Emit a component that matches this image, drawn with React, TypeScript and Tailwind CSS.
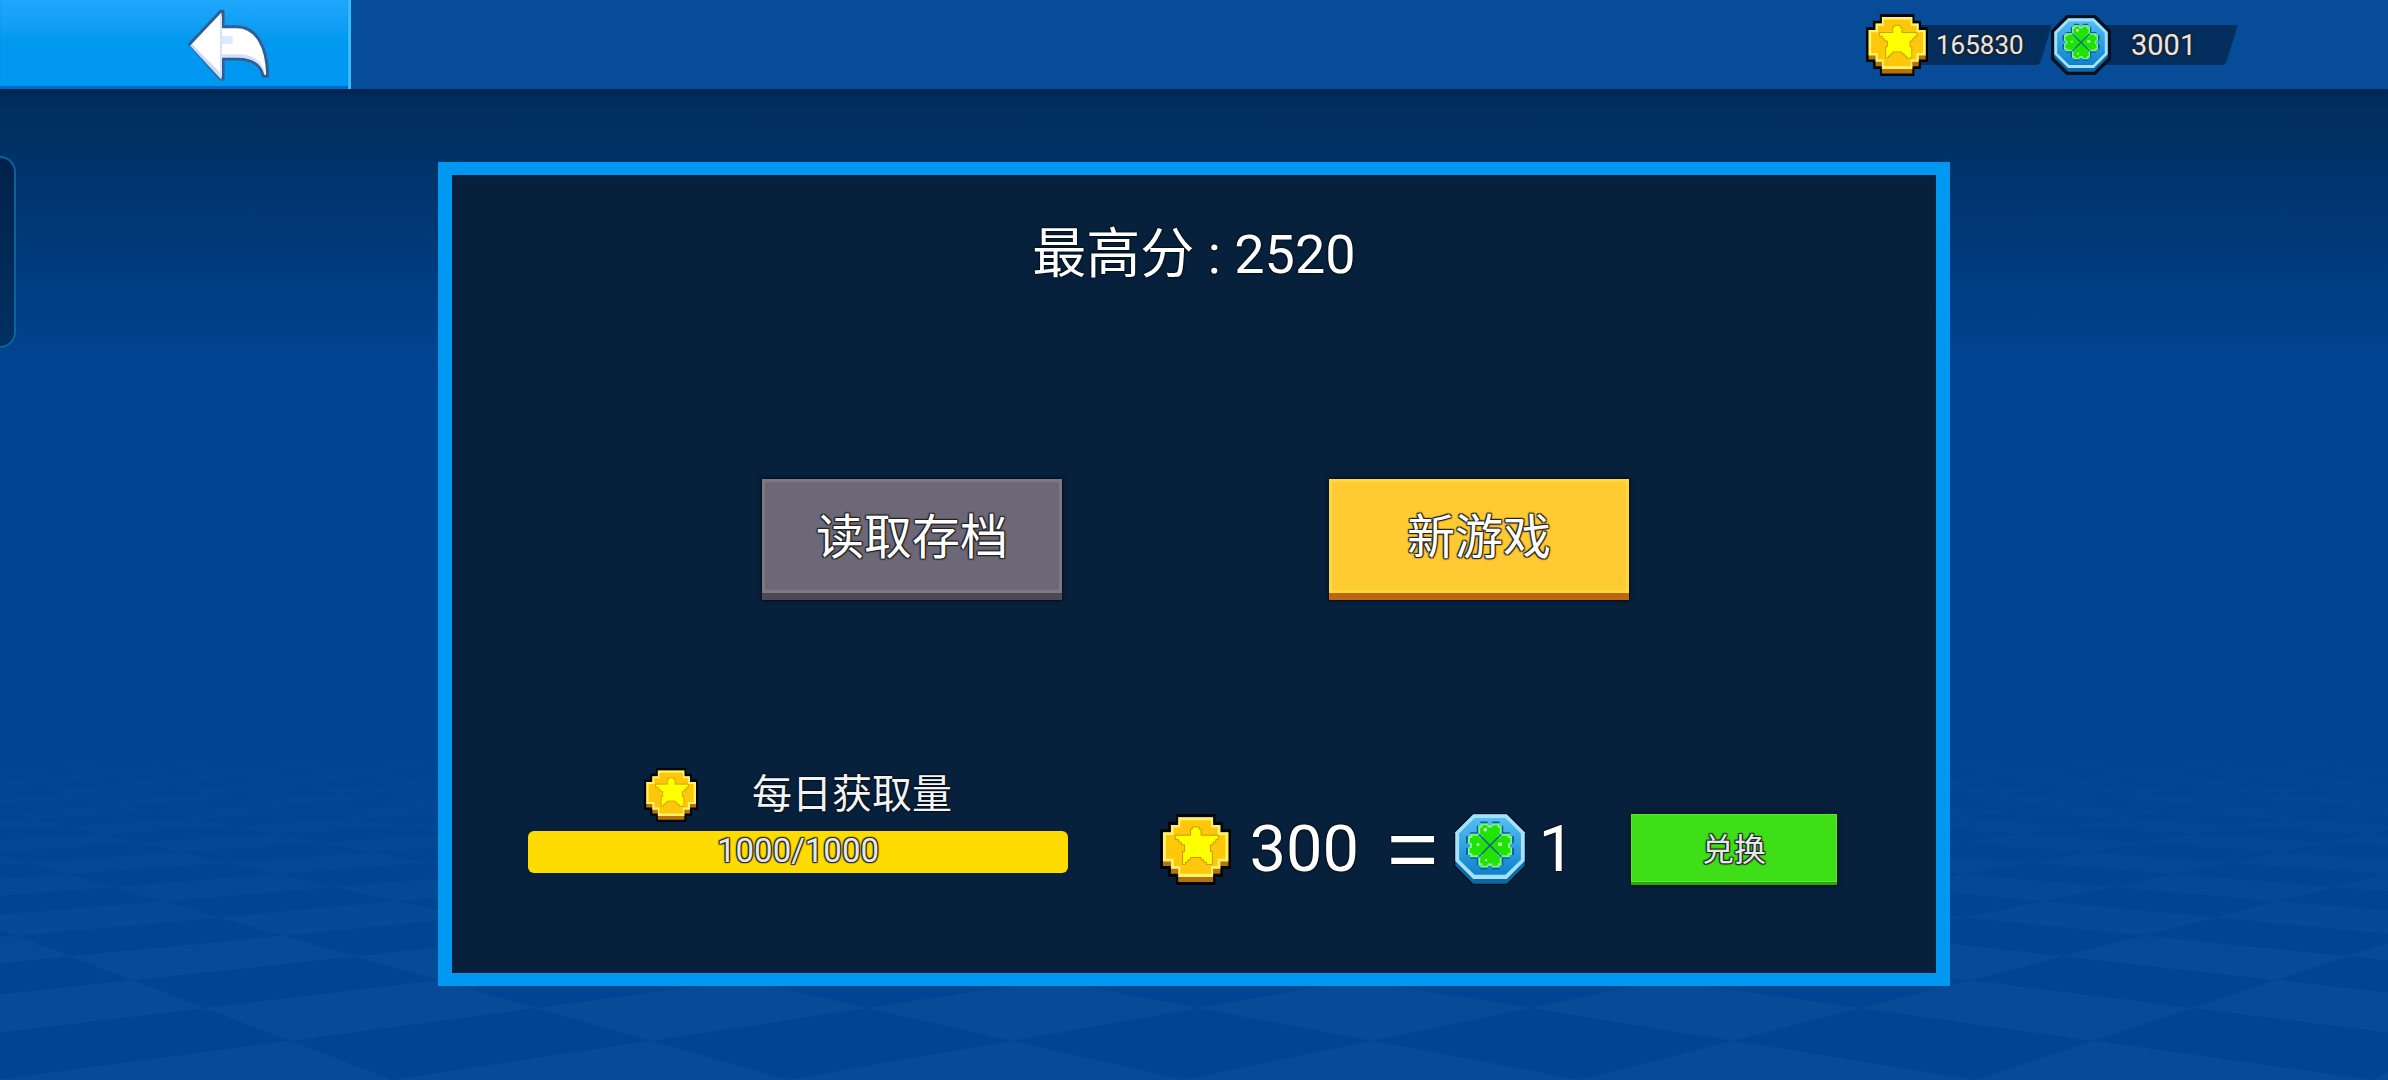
import { useId } from 'react';

const textFont = "font-['Roboto','Noto_Sans_CJK_SC',sans-serif]";
const softOutline = '[text-shadow:0_0_2px_#000,0_0_2px_#000]';
const hardOutline =
  '[text-shadow:1px_1px_1px_#222,-1px_1px_1px_#222,1px_-1px_1px_#222,-1px_-1px_1px_#222,0_0_2px_#222]';

// Floor tiles: two families of lines that meet on the horizon at y = 640
const HORIZON = 640;

function corner(i: number, j: number) {
  const depth = 4054 / (10.115 + 0.9 * (i - j));
  return [-752 + depth * (2.6 + 0.9 * i), HORIZON + depth];
}

function floorPath() {
  const tiles: string[] = [];
  for (let k = -3; k < 40; k++) {
    for (let i = -30; i < 50; i++) {
      const j = i - k;
      if ((i + j) % 2 === 0) continue;
      const pts = [corner(i, j), corner(i + 1, j), corner(i + 1, j + 1), corner(i, j + 1)];
      if (pts.every(([x]) => x < -50 || x > 2440)) continue;
      tiles.push('M' + pts.map(([x, y]) => `${x.toFixed(1)} ${y.toFixed(1)}`).join('L') + 'Z');
    }
  }
  return tiles.join('');
}

const FLOOR = floorPath();

function Floor() {
  return (
    <svg
      className="absolute inset-0 h-full w-full"
      viewBox="0 0 2388 1080"
      preserveAspectRatio="xMidYMax slice"
      aria-hidden="true"
    >
      <defs>
        <linearGradient id="floor-fade" x1="0" y1="740" x2="0" y2="960" gradientUnits="userSpaceOnUse">
          <stop offset="0" stopColor="#054b97" stopOpacity="0" />
          <stop offset="1" stopColor="#054b97" />
        </linearGradient>
      </defs>
      <path d={FLOOR} fill="url(#floor-fade)" />
    </svg>
  );
}

function Coin({ className }: { className: string }) {
  return (
    <svg className={className} viewBox="0 0 214 214" aria-hidden="true">
      <path
        d="M48 0H167V23H190V46H214V166H190V190H167V214H48V190H24V166H0V46H24V23H48Z"
        fill="#050505"
      />
      <path
        d="M55 10H160V33H182V55H206V157H182V180H160V205H55V180H33V157H9V55H33V33H55Z"
        fill="#b3730d"
      />
      <path
        d="M55 10H160V33H182V55H206V143H182V165H160V190H55V165H33V143H9V55H33V33H55Z"
        fill="#fff36e"
      />
      <path
        d="M61 19H154V41H174V63H197V135H174V157H154V180H61V157H41V135H18V63H41V41H61Z"
        fill="#ffc70a"
      />
      <path
        d="M97 46V39H118V46H124V64H176V77H168V85H160V93H152V113H158V152H140V145H132V138H124V131H92V138H84V145H77V152H68V113H74V93H64V85H56V77H46V64H92V46Z"
        fill="#ffff00"
        stroke="#c8960a"
        strokeWidth="3"
      />
    </svg>
  );
}

function Clover({ className, rim }: { className: string; rim: number }) {
  const id = useId();
  return (
    <svg className={className} viewBox="0 0 220 220" aria-hidden="true">
      <defs>
        <linearGradient id={id} x1="0" y1="0" x2="0" y2="1">
          <stop offset="0" stopColor="#55bdf5" />
          <stop offset="1" stopColor="#0f82cc" />
        </linearGradient>
      </defs>
      <path d="M57 0H163L220 57V163L163 220H57L0 163V57Z" fill="#04101c" />
      <g transform={`translate(${rim} ${rim}) scale(${(220 - 2 * rim) / 220})`}>
        <path d="M57 0H163L220 57V163L163 220H57L0 163V57Z" fill="#0d68a6" />
        <path d="M57 0H163L220 57V148L163 205H57L0 148V57Z" fill="#a6e2ff" />
        <path d="M61 12H159L208 61V144L159 192H61L12 144V61Z" fill={`url(#${id})`} />
        {[0, 90, 180, 270].map((turn) => (
          <g key={turn} transform={`rotate(${turn} 110 99)`}>
            <path
              d="M80 26H103M117 26H140M71 36V60M149 36V60"
              stroke="#07609a"
              strokeWidth="6"
              fill="none"
            />
            <path
              d="M110 98L102 90V88H98V86H94V80H86V72H78V61H73V36H80V29H104V35H116V29H140V36H147V61H142V72H134V80H126V86H122V88H118V90Z"
              fill="#84f08a"
            />
            <path d="M110 98L86 74V66H79V43H86V35H102V42H118V35H134V43H141V66H134V74Z" fill="#1fe300" />
          </g>
        ))}
        <path d="M76 65L144 133M144 65L76 133" stroke="#07609a" strokeWidth="5" />
        <path d="M90 44h10v10h-10zM68 92h8v8h-8zM136 90h12v10h-12zM94 142h7v7h-7z" fill="#d6ffd0" />
      </g>
    </svg>
  );
}

function BackArrow() {
  return (
    <svg className="h-18 w-[82px]" viewBox="566 24 246 216" aria-hidden="true">
      <path
        d="M571 129L664 31H671V77H712C768 77 804 132 805 226H792C784 190 760 174 712 174H671V234H664Z"
        fill="#fff"
        stroke="#305d94"
        strokeWidth="9"
        strokeLinejoin="round"
      />
      <path d="M577 132L664 219V231L575 134Z" fill="#c9dcfb" stroke="#c9dcfb" strokeWidth="4" />
      <path d="M667 160H712C758 160 782 176 794 205L796 222C786 186 758 169 712 169H667Z" fill="#cfe0fb" />
      <path d="M662 44H668V226H662Z" fill="#d5e4fb" />
      <path d="M668 105H700V129H668Z" fill="#dceafd" />
    </svg>
  );
}

function PillShape({ className }: { className: string }) {
  return (
    <svg className={className} viewBox="0 0 130 40" preserveAspectRatio="none" aria-hidden="true">
      <path d="M0 0H128Q130 0 129 3L120 36Q119 40 115 40H0Z" fill="#042e5d" />
    </svg>
  );
}

export default function App() {
  return (
    <div
      className={`relative flex min-h-screen flex-col overflow-hidden bg-linear-to-b from-[#002e5f] from-10% to-[#004594] to-35% text-white ${textFont}`}
    >
      <Floor />

      {/* Top bar */}
      <header className="relative flex h-[89px] items-center justify-between bg-[#074c98] pr-[150px] shadow-[0_2px_10px_0_#001d40]">
        <button
          type="button"
          aria-label="返回"
          className="flex h-full w-[351px] items-center justify-end border-r-3 border-r-[#35bdfb] bg-linear-to-b from-[#1fa7fb] to-[#0098f0] to-50% pr-[78px] shadow-[inset_0_-3px_1px_#0068c8]"
        >
          <BackArrow />
        </button>

        <div className="flex items-center">
          <div className="relative flex h-15 w-[185px] items-center">
            <PillShape className="absolute left-10 h-10 w-[146px]" />
            <Coin className="relative h-[62px] w-[62px]" />
            <span className={`relative ml-2 pt-0.5 text-[26px] text-gray-200 ${hardOutline}`}>165830</span>
          </div>
          <div className="relative flex h-15 w-[187px] items-center">
            <PillShape className="absolute left-10 h-10 w-[147px]" />
            <Clover className="relative h-15 w-15" rim={12} />
            <span className={`relative ml-5 pt-0.5 text-[29px] text-gray-200 ${hardOutline}`}>3001</span>
          </div>
        </div>
      </header>

      {/* Side drawer handle */}
      <div className="absolute top-39 left-0 h-48 w-4 rounded-r-2xl border-2 border-l-0 border-[#0c639c] bg-linear-to-b from-[#00224a] to-[#003062]" />

      <main className="relative flex flex-1 justify-center pt-[73px] pb-[94px]">
        <section className="flex w-full max-w-[1512px] flex-col border-x-14 border-y-13 border-[#0098f0] bg-[#07213c] pt-11">
          <h1 className={`text-center text-[54px] leading-18 ${softOutline}`}>最高分 : 2520</h1>

          <div className="mt-[188px] flex justify-center gap-[267px] pl-[3px]">
            <button
              type="button"
              className={`h-[121px] w-[300px] border-b-7 border-b-[#4d4857] bg-[#6d6877] pt-1 text-5xl shadow-[inset_0_0_0_3px_#7b7b7d,0_0_4px_#000] ${hardOutline}`}
            >
              读取存档
            </button>
            <button
              type="button"
              className={`h-[121px] w-[300px] border-b-7 border-b-[#bd6713] bg-[#ffca32] pt-1 text-5xl shadow-[inset_0_0_1px_3px_#ffd940,0_0_4px_#000] ${hardOutline}`}
            >
              新游戏
            </button>
          </div>

          <div className="mt-[168px] flex items-end justify-between pr-[99px] pb-[85px] pl-[76px]">
            <div className="mb-3 w-[540px]">
              <div className="flex items-center gap-[54px] pl-[116px]">
                <Coin className="h-[54px] w-[54px]" />
                <span id="daily" className={`text-[40px] leading-[54px] text-gray-100 ${softOutline}`}>
                  每日获取量
                </span>
              </div>
              <div
                role="progressbar"
                aria-labelledby="daily"
                aria-valuenow={1000}
                aria-valuemax={1000}
                className={`mt-[9px] flex h-[42px] items-center justify-center rounded-md bg-[#ffdc00] pb-0.5 text-[33px] text-gray-200 ${hardOutline}`}
              >
                1000/1000
              </div>
            </div>

            <div className="flex h-18 items-center">
              <Coin className="h-[71px] w-[71px]" />
              <span className={`ml-[18px] text-[65px] leading-18 ${softOutline}`}>300</span>
              <span className={`ml-7 font-['Liberation_Sans'] text-[88px] leading-18 ${softOutline}`}>=</span>
              <Clover className="ml-4 h-18 w-18" rim={4} />
              <span className={`ml-3 text-[65px] leading-18 ${softOutline}`}>1</span>
              <button
                type="button"
                className={`ml-[56px] h-[71px] w-[206px] border-b-3 border-b-[#2da312] bg-[#3fdf18] pt-1 text-[32px] text-gray-200 shadow-[inset_0_0_0_1px_#52ec2c,0_0_4px_#000] ${hardOutline}`}
              >
                兑换
              </button>
            </div>
          </div>
        </section>
      </main>
    </div>
  );
}
